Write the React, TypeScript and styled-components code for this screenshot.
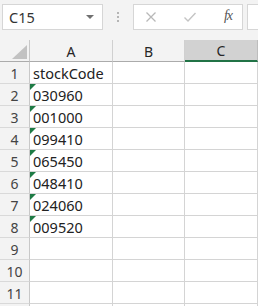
import React from "react";
import styled, { createGlobalStyle } from "styled-components";

const Global = createGlobalStyle`
  html, body { margin: 0; padding: 0; background: #ffffff; }
  body { font-family: "Segoe UI", "Noto Sans", "Open Sans", sans-serif; }
  * { box-sizing: border-box; }
`;

const Page = styled.div`
  width: 258px;
  height: 306px;
  overflow: hidden;
  background: #ffffff;
`;

const Toolbar = styled.div`
  height: 40px;
  background: #f3f3f3;
  display: flex;
  align-items: flex-start;
  padding: 4px 0 0 2px;
`;

const NameBox = styled.div`
  width: 101px;
  height: 26px;
  background: #ffffff;
  border: 1px solid #d6d6d6;
  display: flex;
  align-items: center;
  justify-content: space-between;
  padding: 0 6px 0 6px;
  font-size: 14.5px;
  color: #333;
`;

const Arrow = styled.span`
  width: 0;
  height: 0;
  border-left: 4px solid transparent;
  border-right: 4px solid transparent;
  border-top: 4px solid #707070;
  margin-right: 2px;
`;

const Dots = styled.div`
  width: 30px;
  height: 26px;
  display: flex;
  flex-direction: column;
  align-items: center;
  justify-content: center;
  gap: 2px;
`;

const Dot = styled.span`
  width: 2px;
  height: 2px;
  background: #b5b5b5;
`;

const FxBox = styled.div`
  width: 110px;
  height: 26px;
  background: #ffffff;
  border: 1px solid #d6d6d6;
  display: flex;
  align-items: center;
  padding: 0 10px 0 11px;
  justify-content: space-between;
`;

const Fx = styled.span`
  font-family: "Liberation Serif", "DejaVu Serif", serif;
  font-style: italic;
  font-size: 14px;
  color: #555;
  letter-spacing: -1px;
  margin-top: -2px;
`;

const FormulaInput = styled.div`
  flex: 1;
  height: 26px;
  margin-left: 4px;
  background: #ffffff;
  border: 1px solid #d6d6d6;
  border-right: none;
`;

const Grid = styled.div`
  display: grid;
  grid-template-columns: 30px 83px 72px 73px;
  grid-auto-rows: 22px;
`;

const ColHead = styled.div<{ $sel?: boolean }>`
  background: ${(p) => (p.$sel ? "#d2d2d2" : "#f3f3f3")};
  border-right: 1px solid ${(p) => (p.$sel ? "#bdbdbd" : "#d0d0d0")};
  border-bottom: ${(p) => (p.$sel ? "2px solid #217346" : "1px solid #ababab")};
  display: flex;
  align-items: center;
  justify-content: center;
  font-size: 14px;
  color: #262626;
  padding-top: 1px;
`;

const Corner = styled.div`
  background: #f3f3f3;
  border-right: 1px solid #c8c8c8;
  border-bottom: 1px solid #ababab;
  position: relative;
`;

const CornerTri = styled.svg`
  position: absolute;
  left: 12px;
  top: 5px;
`;

const RowHead = styled.div`
  background: #f3f3f3;
  border-right: 1px solid #c8c8c8;
  border-bottom: 1px solid #d9d9d9;
  display: flex;
  align-items: center;
  justify-content: center;
  font-size: 14px;
  color: #444;
  padding-top: 1px;
`;

const Cell = styled.div<{ $flag?: boolean }>`
  position: relative;
  border-right: 1px solid #d4d4d4;
  border-bottom: 1px solid #d4d4d4;
  font-size: 14.5px;
  color: #222;
  padding: 1px 0 0 3px;
  display: flex;
  align-items: center;
  white-space: nowrap;
  overflow: visible;
  ${(p) =>
    p.$flag
      ? `&::before {
    content: "";
    position: absolute;
    left: 0;
    top: 0;
    width: 0;
    height: 0;
    border-top: 6px solid #1e7b45;
    border-right: 6px solid transparent;
  }`
      : ""}
`;

const data: string[] = [
  "stockCode",
  "030960",
  "001000",
  "099410",
  "065450",
  "048410",
  "024060",
  "009520",
  "",
  "",
  "",
];

export default function App() {
  return (
    <Page>
      <Global />
      <Toolbar>
        <NameBox>
          <span>C15</span>
          <Arrow />
        </NameBox>
        <Dots>
          <Dot />
          <Dot />
          <Dot />
        </Dots>
        <FxBox>
          <svg width="12" height="12" viewBox="0 0 12 12">
            <path d="M1.5 1.5 L10.5 10.5 M10.5 1.5 L1.5 10.5" stroke="#b8b8b8" strokeWidth="1.3" />
          </svg>
          <svg width="14" height="12" viewBox="0 0 14 12">
            <path d="M1.5 6.5 L5 10 L12.5 2" stroke="#c4c4c4" strokeWidth="1.4" fill="none" />
          </svg>
          <Fx>fx</Fx>
        </FxBox>
        <FormulaInput />
      </Toolbar>
      <Grid>
        <Corner>
          <CornerTri width="15" height="14" viewBox="0 0 15 14">
            <polygon points="0,14 15,14 15,0" fill="#c2c2c2" />
          </CornerTri>
        </Corner>
        <ColHead>A</ColHead>
        <ColHead>B</ColHead>
        <ColHead $sel>C</ColHead>
        {data.map((v, i) => (
          <React.Fragment key={i}>
            <RowHead>{i + 1}</RowHead>
            <Cell $flag={i >= 1 && i <= 7}>{v}</Cell>
            <Cell />
            <Cell />
          </React.Fragment>
        ))}
        <RowHead />
        <Cell />
        <Cell />
        <Cell />
      </Grid>
    </Page>
  );
}
